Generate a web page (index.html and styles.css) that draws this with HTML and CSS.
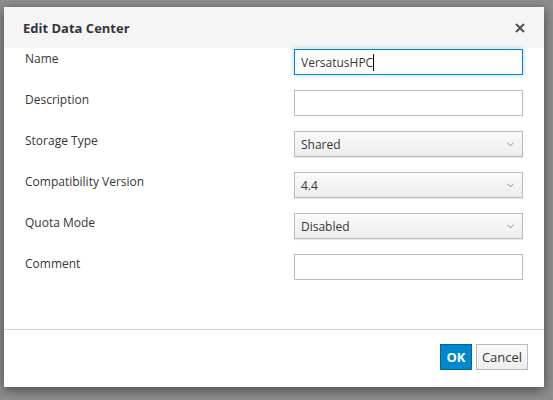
FILE: index.html
```html
<!DOCTYPE html>
<html>
<head>
<meta charset="utf-8">
<link rel="stylesheet" href="styles.css">
</head>
<body>
<div class="dialog">
  <div class="header">
    <span class="title">Edit Data Center</span>
    <svg class="close" width="10" height="10" viewBox="0 0 10 10"><path d="M1 1L9 9M9 1L1 9" stroke="#4d5258" stroke-width="2" fill="none"/></svg>
  </div>
  <div class="body">
    <div class="row"><label class="lbl">Name</label><div class="input focus"><span class="val">VersatusHPC</span><span class="caret"></span></div></div>
    <div class="row"><label class="lbl">Description</label><div class="input"></div></div>
    <div class="row"><label class="lbl">Storage Type</label><div class="select"><span class="val">Shared</span><svg class="chev" width="7" height="5" viewBox="0 0 7 5"><path d="M0.5 0.8L3.5 3.8L6.5 0.8" stroke="#8b8d8f" stroke-width="1" fill="none"/></svg></div></div>
    <div class="row"><label class="lbl">Compatibility Version</label><div class="select"><span class="val">4.4</span><svg class="chev" width="7" height="5" viewBox="0 0 7 5"><path d="M0.5 0.8L3.5 3.8L6.5 0.8" stroke="#8b8d8f" stroke-width="1" fill="none"/></svg></div></div>
    <div class="row"><label class="lbl">Quota Mode</label><div class="select"><span class="val">Disabled</span><svg class="chev" width="7" height="5" viewBox="0 0 7 5"><path d="M0.5 0.8L3.5 3.8L6.5 0.8" stroke="#8b8d8f" stroke-width="1" fill="none"/></svg></div></div>
    <div class="row"><label class="lbl">Comment</label><div class="input"></div></div>
  </div>
  <div class="footer">
    <button class="btn primary">OK</button>
    <button class="btn cancel">Cancel</button>
  </div>
</div>
</body>
</html>
```
FILE: styles.css
```css
html, body {
  margin: 0;
  padding: 0;
}
body {
  width: 553px;
  height: 400px;
  background: #8f8f8f;
  font-family: "Open Sans", "Liberation Sans", sans-serif;
  font-size: 12px;
  color: #363636;
  overflow: hidden;
  padding-top: 7px;
  padding-left: 4px;
  box-sizing: border-box;
}
.dialog {
  width: 540px;
  height: 380px;
  background: #fff;
  box-shadow: 0 3px 12px rgba(0,0,0,0.5);
  display: flex;
  flex-direction: column;
}
.header {
  height: 41px;
  background: #f5f5f5;
  display: flex;
  align-items: center;
  justify-content: space-between;
  padding: 0 19px 0 19px;
  box-sizing: border-box;
}
.title {
  font-weight: 700;
  font-size: 13px;
  color: #363636;
}
.close {
  display: block;
}
.body {
  flex: 1;
  padding: 1px 21px 0 21px;
  display: flex;
  flex-direction: column;
  gap: 15px;
}
.row {
  display: flex;
  justify-content: space-between;
  align-items: flex-start;
  height: 26px;
}
.lbl {
  line-height: 20px;
}
.input, .select {
  width: 229px;
  height: 26px;
  box-sizing: border-box;
  border: 1px solid #bbb;
  background: #fff;
  display: flex;
  align-items: center;
  padding: 0 6px;
}
.input.focus {
  border-color: #0088ce;
  box-shadow: 0 0 5px rgba(0,136,206,0.35);
}
.caret {
  display: inline-block;
  width: 1px;
  height: 17px;
  background: #000;
}
.select {
  background: linear-gradient(#fafafa, #ededed);
  justify-content: space-between;
  box-shadow: 0 1px 1px rgba(3,3,3,0.08);
  padding-right: 8px;
}
.chev {
  display: block;
}
.footer {
  border-top: 1px solid #d1d1d1;
  height: 58px;
  display: flex;
  justify-content: flex-end;
  align-items: flex-start;
  padding: 14px 16px 0 0;
  gap: 4px;
  box-sizing: border-box;
}
.btn {
  height: 26px;
  font-family: inherit;
  font-size: 13px;
  padding: 0;
  border: 1px solid #bbb;
  background: linear-gradient(#fafafa, #ededed);
  color: #363636;
  margin: 0;
}
.btn.primary {
  width: 32px;
  background: #0088ce;
  border-color: #00659c;
  color: #fff;
  font-weight: 700;
}
.btn.cancel {
  width: 52px;
}
```
